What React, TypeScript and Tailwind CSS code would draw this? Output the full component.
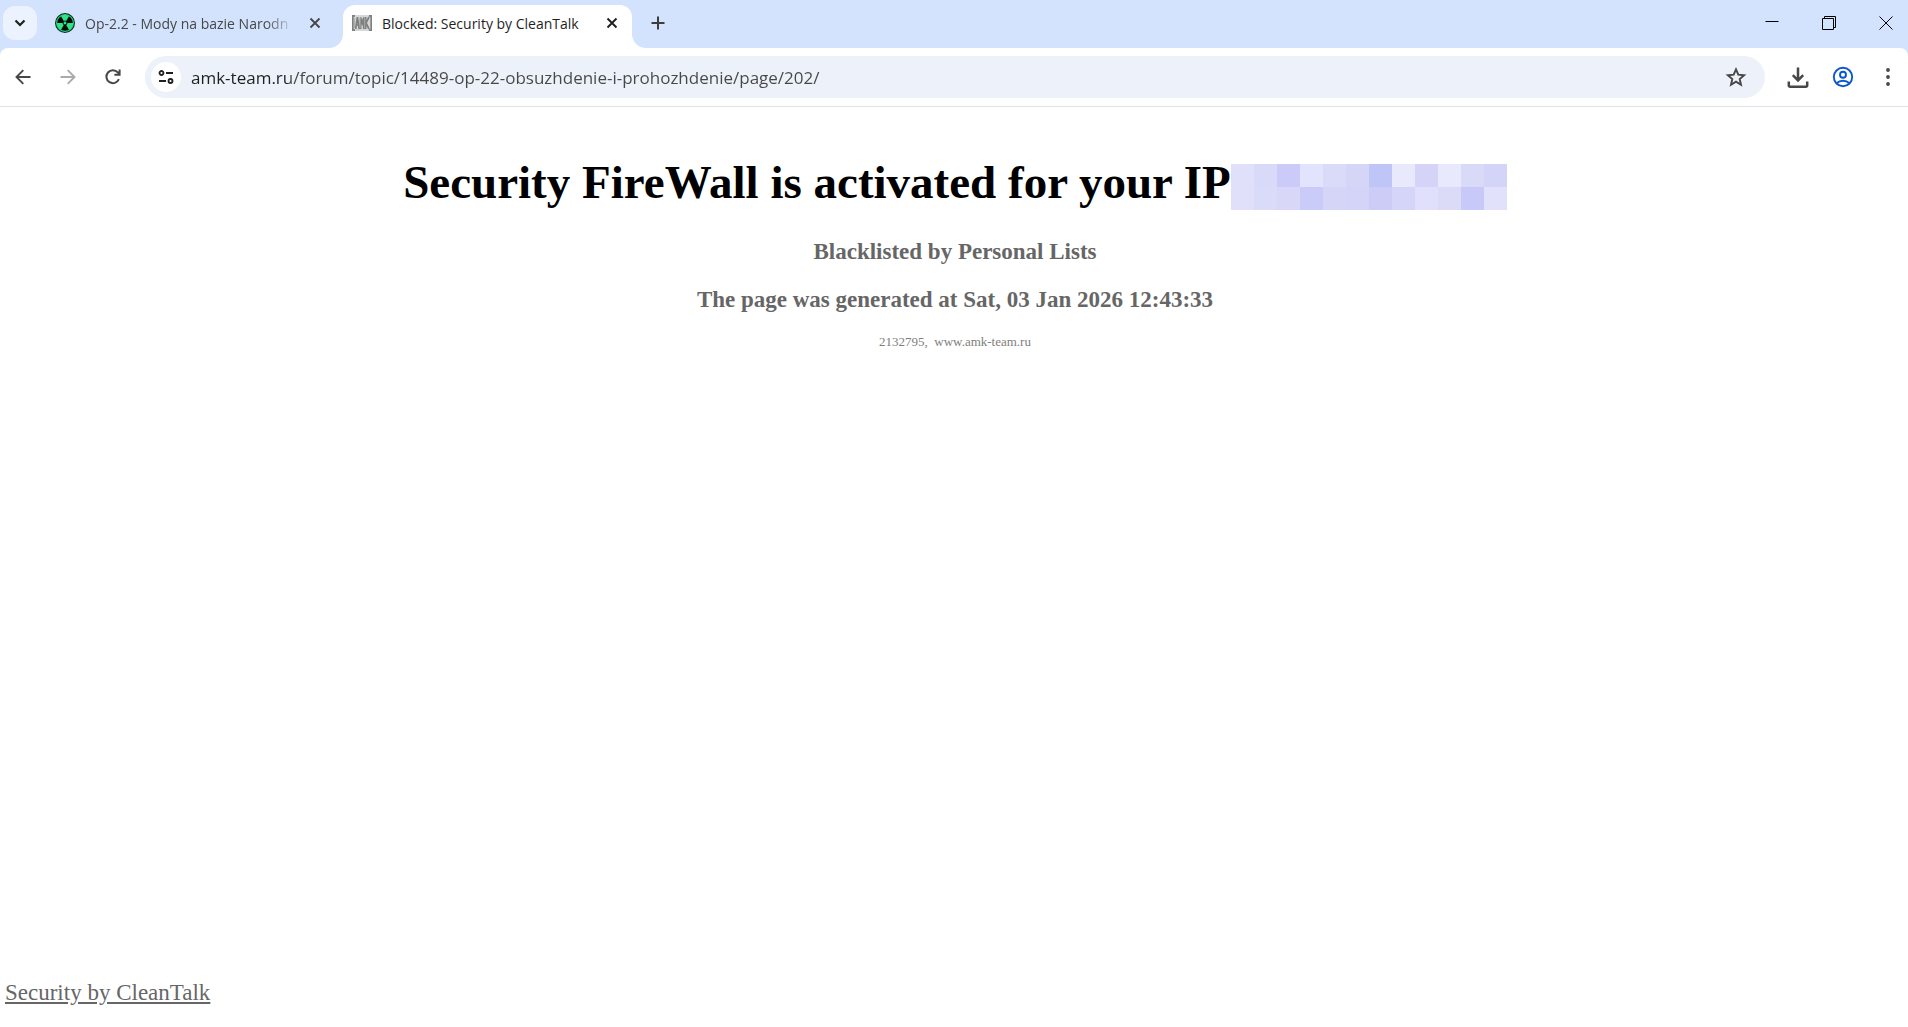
import type { ReactNode } from 'react';

const maskRows = [
  ['bg-[#e0e0fb]', 'bg-[#d9d9f9]', 'bg-[#cccaf9]', 'bg-[#e2e3fc]', 'bg-[#dadaf9]', 'bg-[#d5d5f7]', 'bg-[#c0c5f8]', 'bg-[#e9e9fc]', 'bg-[#d5d4f8]', 'bg-[#e9e9fd]', 'bg-[#d9d9f8]', 'bg-[#d4d4f8]'],
  ['bg-[#e0e0fa]', 'bg-[#dadaf9]', 'bg-[#d8d7f8]', 'bg-[#cbcbfa]', 'bg-[#d5d5f8]', 'bg-[#d4d4f8]', 'bg-[#cdccf7]', 'bg-[#d5d5fa]', 'bg-[#e0e0fc]', 'bg-[#dbdbf8]', 'bg-[#c9c9f9]', 'bg-[#e1e1fb]'],
];

interface IconButtonProps {
  label: string;
  className?: string;
  children: ReactNode;
}

function IconButton({ label, className = '', children }: IconButtonProps) {
  return (
    <button type="button" aria-label={label} className={`flex shrink-0 items-center justify-center ${className}`}>
      {children}
    </button>
  );
}

function RadiationIcon() {
  return (
    <svg viewBox="0 0 20 20" className="size-5 shrink-0" aria-hidden="true">
      <circle cx="10" cy="10" r="10" fill="#12261d" />
      <circle cx="10" cy="10" r="8.4" fill="#050b08" stroke="#21d67c" strokeWidth="1.1" />
      <g fill="#2be58a">
        <path id="blade" d="M8.8 7.9 5.9 2.9a8.2 8.2 0 0 1 8.2 0l-2.9 5a2.4 2.4 0 0 0-2.4 0Z" />
        <use href="#blade" transform="rotate(120 10 10)" />
        <use href="#blade" transform="rotate(240 10 10)" />
        <circle cx="10" cy="10" r="1.4" />
      </g>
    </svg>
  );
}

function AmkIcon() {
  return (
    <svg viewBox="0 0 20 16" className="h-4 w-5 shrink-0" fill="none" stroke="#7c807e" strokeWidth="1.7" aria-hidden="true">
      <path d="M0 0h20v16H0z" fill="#d6d8d7" stroke="none" />
      <path d="M3 .8H.8v14.4H3M17 .8h2.2v14.4H17" />
      <path d="M3.6 14 5.4 2.2 7.2 14M4 10h3M8.6 14V2.5l1.6 6 1.6-6V14M13.6 2v12M17 2l-3 6 3 6" />
      <path d="M2.6 3v10M8 3v10M12.7 3v10" stroke="#a9adab" strokeWidth="1" />
    </svg>
  );
}

function CloseIcon() {
  return (
    <svg viewBox="0 0 12 12" className="size-3" fill="none" stroke="currentColor" strokeWidth="1.9" aria-hidden="true">
      <path d="m1.5 1.5 9 9M10.5 1.5l-9 9" />
    </svg>
  );
}

function TabStrip() {
  return (
    <div className="flex h-12 bg-[#d3e3fd] font-['Open_Sans',sans-serif] text-sm">
      <IconButton label="Search tabs" className="ml-[3px] mt-[6px] size-[34px] rounded-xl bg-[#ecf3fe] text-[#1f1f1f]">
        <svg viewBox="0 0 12 8" className="h-2 w-3" fill="none" stroke="currentColor" strokeWidth="2.2" aria-hidden="true">
          <path d="m1.5 1.5 4.5 4.5 4.5-4.5" />
        </svg>
      </IconButton>

      <div className="ml-[18px] flex h-[46px] w-72 items-center text-[#474747]">
        <RadiationIcon />
        <span className="ml-[10px] w-[212px] whitespace-nowrap pt-px [mask-image:linear-gradient(to_right,black_180px,transparent_210px)]">
          Op-2.2 - Mody na bazie Narodn
        </span>
        <IconButton label="Close tab" className="ml-2 size-5">
          <CloseIcon />
        </IconButton>
      </div>

      <div className="relative mt-[5px] flex w-[289px] items-center rounded-t-xl bg-white pb-[7px] pl-[9px] text-[#1f1f1f]">
        <svg viewBox="0 0 14 14" className="absolute bottom-0 right-full size-[14px] fill-white" aria-hidden="true">
          <path d="M14 0v14H0A14 14 0 0 0 14 0Z" />
        </svg>
        <svg viewBox="0 0 14 14" className="absolute bottom-0 left-full size-[14px] fill-white" aria-hidden="true">
          <path d="M0 0v14h14A14 14 0 0 1 0 0Z" />
        </svg>
        <AmkIcon />
        <span className="ml-[10px] w-[212px] whitespace-nowrap pt-px">Blocked: Security by CleanTalk</span>
        <IconButton label="Close tab" className="ml-2 size-5">
          <CloseIcon />
        </IconButton>
      </div>

      <IconButton label="New tab" className="ml-4 mt-[13px] size-5 text-[#3c3c3c]">
        <svg viewBox="0 0 14 14" className="size-[14px]" fill="none" stroke="currentColor" strokeWidth="2" aria-hidden="true">
          <path d="M7 .5v13M.5 7h13" />
        </svg>
      </IconButton>

      <div className="ml-auto mr-[15px] flex h-[45px] items-center gap-[43px] text-black">
        <IconButton label="Minimize">
          <svg viewBox="0 0 14 14" className="size-[14px]" stroke="currentColor" aria-hidden="true">
            <path d="M.5 5.5h13" />
          </svg>
        </IconButton>
        <IconButton label="Restore">
          <svg viewBox="0 0 14 14" className="size-[14px]" fill="none" stroke="currentColor" aria-hidden="true">
            <path d="M.5 2.5h11v11H.5zM2.5 2.5v-2h11v11h-2" />
          </svg>
        </IconButton>
        <IconButton label="Close window">
          <svg viewBox="0 0 14 14" className="size-[14px]" stroke="currentColor" aria-hidden="true">
            <path d="m.5.5 13 13M13.5.5l-13 13" />
          </svg>
        </IconButton>
      </div>
    </div>
  );
}

function Toolbar() {
  return (
    <div className="bg-[#d3e3fd]">
      <div className="flex h-[59px] items-center rounded-t-lg border-b border-[#dfe1e5] bg-white text-[#474747]">
        <IconButton label="Back" className="ml-[13px] size-5">
          <svg viewBox="0 0 20 20" className="size-5" fill="none" stroke="currentColor" strokeWidth="1.9" aria-hidden="true">
            <path d="M17.5 10H4M10.3 3.2 3.5 10l6.8 6.8" />
          </svg>
        </IconButton>
        <IconButton label="Forward" className="ml-[25px] size-5 text-[#ababab]">
          <svg viewBox="0 0 20 20" className="size-5" fill="none" stroke="currentColor" strokeWidth="1.9" aria-hidden="true">
            <path d="M2.5 10H16M9.7 3.2l6.8 6.8-6.8 6.8" />
          </svg>
        </IconButton>
        <IconButton label="Reload" className="ml-[25px] size-5">
          <svg viewBox="0 0 20 20" className="size-5" fill="none" stroke="currentColor" strokeWidth="2" aria-hidden="true">
            <path d="M15.9 12.2A6.5 6.5 0 1 1 14.8 5.4L16.5 7.4M16.6 2.6v5.2h-5.2" />
          </svg>
        </IconButton>

        <form className="ml-[22px] flex h-[42px] flex-1 items-center rounded-full bg-[#ecf1fa] pl-[6px] pr-[17px]">
          <IconButton label="View site information" className="size-[30px] rounded-full bg-white text-[#1f1f1f]">
            <svg viewBox="0 0 16 16" className="size-4" fill="none" stroke="currentColor" strokeWidth="1.8" aria-hidden="true">
              <circle cx="3.5" cy="4" r="2" />
              <circle cx="12.5" cy="12" r="2" />
              <path d="M8 4h7M1 12h7" />
            </svg>
          </IconButton>
          {/* hard stop in the gradient keeps the domain darker than the path */}
          <input
            type="text"
            aria-label="Address"
            defaultValue="amk-team.ru/forum/topic/14489-op-22-obsuzhdenie-i-prohozhdenie/page/202/"
            className="ml-[10px] min-w-0 flex-1 bg-[linear-gradient(to_right,#1f1f1f_99px,#474747_99px)] bg-clip-text pt-0.5 font-['Open_Sans',sans-serif] text-[17px] text-transparent outline-none"
          />
          <IconButton label="Bookmark this tab" className="size-6">
            <svg viewBox="0 0 24 24" className="size-6" fill="none" stroke="currentColor" strokeWidth="1.9" aria-hidden="true">
              <path d="m12 4.4 2.3 5.3 5.8.5-4.4 3.8 1.3 5.7-5-3-5 3 1.3-5.7-4.4-3.8 5.8-.5Z" />
            </svg>
          </IconButton>
        </form>

        <IconButton label="Downloads" className="ml-[21px] size-6">
          <svg viewBox="0 0 24 24" className="size-6" fill="none" stroke="currentColor" strokeWidth="2.5" aria-hidden="true">
            <path d="M12 2.5v13M6.8 10.2l5.2 5.2 5.2-5.2M2.8 16.5v3.7a1.5 1.5 0 0 0 1.5 1.5h15.4a1.5 1.5 0 0 0 1.5-1.5v-3.7" />
          </svg>
        </IconButton>
        <IconButton label="Profile" className="ml-[21px] size-6 text-[#0b57d0]">
          <svg viewBox="0 0 24 24" className="size-6" fill="none" stroke="currentColor" strokeWidth="1.9" aria-hidden="true">
            <circle cx="12" cy="12" r="9.2" />
            <circle cx="12" cy="9.8" r="3" />
            <path d="M5.5 18.2a10 10 0 0 1 13 0" />
          </svg>
        </IconButton>
        <IconButton label="Menu" className="ml-[21px] mr-[8px] size-6">
          <svg viewBox="0 0 24 24" className="size-6" fill="currentColor" aria-hidden="true">
            <circle cx="12" cy="5" r="1.9" />
            <circle cx="12" cy="12" r="1.9" />
            <circle cx="12" cy="19" r="1.9" />
          </svg>
        </IconButton>
      </div>
    </div>
  );
}

function BlockedPage() {
  return (
    <main className="flex flex-1 flex-col bg-white font-['Liberation_Serif',serif] text-[#666666]">
      <div className="flex flex-col items-center pl-0.5 pt-[47px]">
        <h1 className="flex items-end text-[47px] leading-[56px] font-bold text-black">
          Security FireWall is activated for your IP
          <span className="flex flex-col" aria-label="hidden address">
            {maskRows.map((row, y) => (
              <span key={y} className="flex">
                {row.map((color, x) => (
                  <span key={x} className={`size-[23px] ${color}`} />
                ))}
              </span>
            ))}
          </span>
        </h1>
        <h3 className="mt-7 text-[23px] leading-7 font-bold">Blacklisted by Personal Lists</h3>
        <h3 className="mt-5 text-[23px] leading-7 font-bold">The page was generated at Sat, 03 Jan 2026 12:43:33</h3>
        <p className="mt-5 text-[13px] leading-4 text-[#808080]">2132795, &nbsp;www.amk-team.ru</p>
      </div>
      <footer className="mt-auto px-[5px] pb-5 text-[23px] leading-7">
        <a href="#" className="underline">Security by CleanTalk</a>
      </footer>
    </main>
  );
}

export default function App() {
  return (
    <div className="flex min-h-screen flex-col">
      <header>
        <TabStrip />
        <Toolbar />
      </header>
      <BlockedPage />
    </div>
  );
}
